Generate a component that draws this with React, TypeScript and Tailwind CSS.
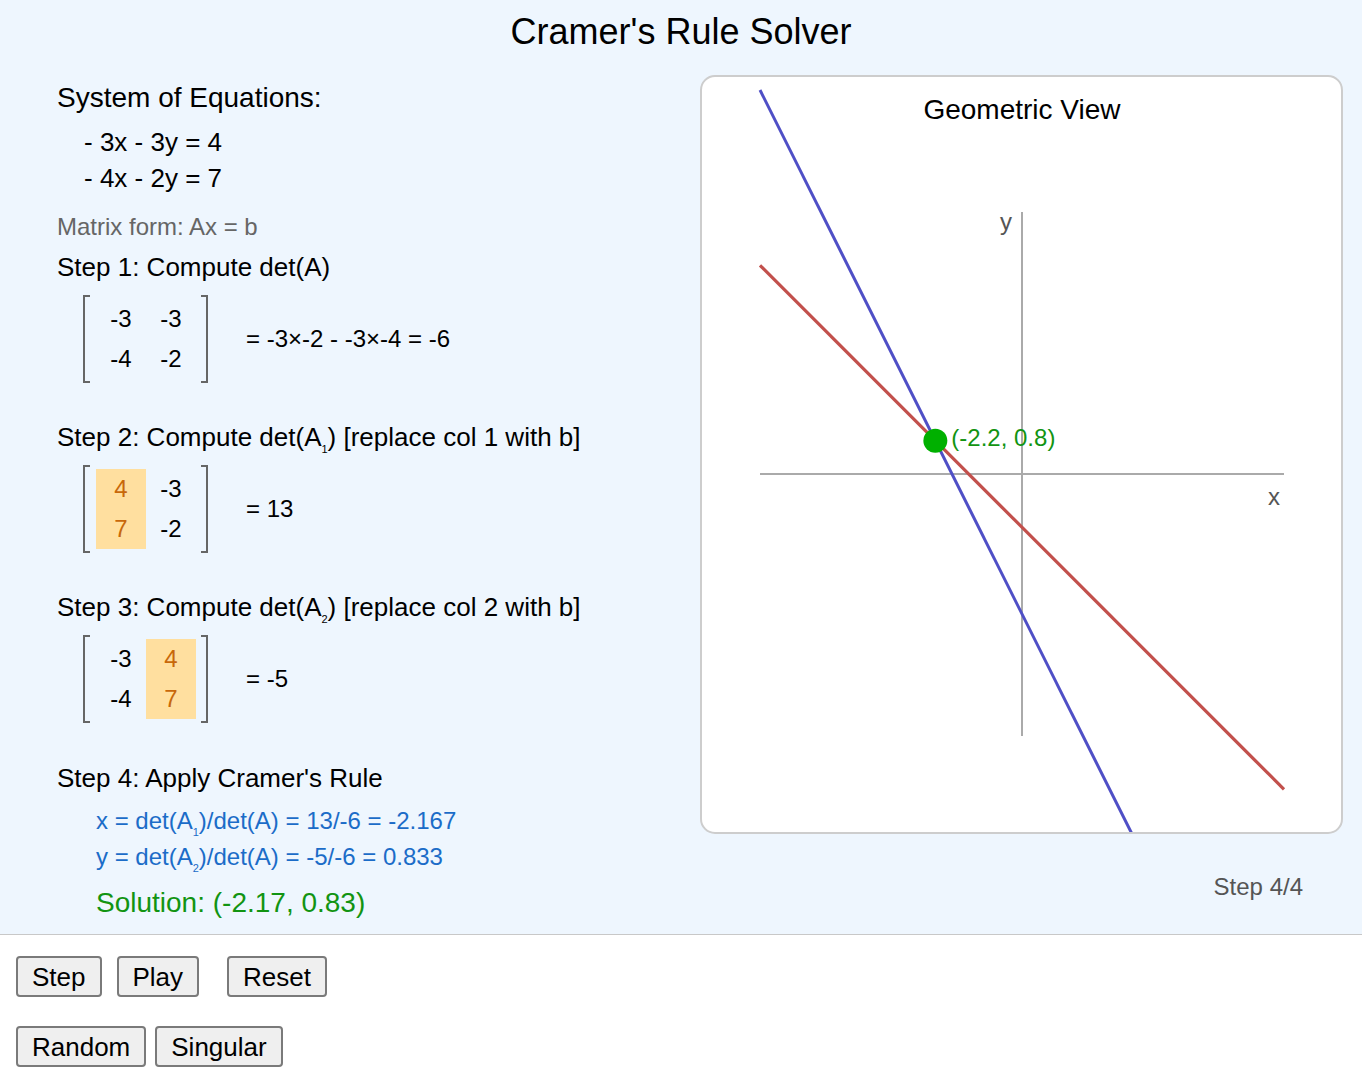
import React from 'react'

const A = [
  [-3, -3],
  [-4, -2],
]
const b = [4, 7]

// plot constants (svg local coords inside the panel border)
const CX = 320
const CY = 397
const S = 40
const U = 6.55

function px(u: number) {
  return CX + u * S
}
function py(v: number) {
  return CY - v * S
}

function Matrix({ rows, hl }: { rows: number[][]; hl?: number }) {
  return (
    <div className="ml-[26px] flex items-stretch">
      <div className="w-[7px] border-y-2 border-l-2 border-[#666]" />
      <div className="ml-[6px] mr-[5px] grid grid-cols-[50px_50px] py-[4px]">
        {rows.map((r, i) =>
          r.map((v, j) => (
            <div
              key={`${i}-${j}`}
              className={`h-[40px] text-center text-[24px] leading-[40px] ${
                hl === j ? 'bg-[#ffdf9f] text-[#c8680a]' : 'text-black'
              }`}
            >
              {v}
            </div>
          ))
        )}
      </div>
      <div className="w-[7px] border-y-2 border-r-2 border-[#666]" />
    </div>
  )
}

function Sub({ n }: { n: number }) {
  return <span className="align-[-7px] text-[11px] leading-none">{n}</span>
}

function StepRow({ rows, hl, result }: { rows: number[][]; hl?: number; result: string }) {
  return (
    <div className="mt-[10px] flex items-center">
      <Matrix rows={rows} hl={hl} />
      <div className="ml-[38px] text-[24px] leading-[32px]">{result}</div>
    </div>
  )
}

function GeometricView() {
  const x1 = -U
  const x2 = U
  // -4x - 2y = 7  ->  y = -2x - 3.5
  const blue = (x: number) => -2 * x - 3.5
  // -3x - 3y = 4  ->  y = -x - 4/3
  const red = (x: number) => -x - 4 / 3
  const sx = -13 / 6
  const sy = 5 / 6

  return (
    <div className="relative h-[759px] w-[643px] overflow-hidden rounded-[15px] border-2 border-[#cdcdcd] bg-white">
      <svg width="639" height="755" className="absolute left-0 top-0">
        <text x="320" y="42" textAnchor="middle" fontSize="28" fill="#000">
          Geometric View
        </text>
        <line x1={px(-U)} y1={CY} x2={px(U)} y2={CY} stroke="#aaa" strokeWidth="2" />
        <line x1={CX} y1={py(6.55)} x2={CX} y2={py(-6.55)} stroke="#aaa" strokeWidth="2" />
        <text x="310" y="153" textAnchor="end" fontSize="24" fill="#555">
          y
        </text>
        <text x="578" y="428" textAnchor="end" fontSize="24" fill="#555">
          x
        </text>
        <line x1={px(x1)} y1={py(blue(x1))} x2={px(x2)} y2={py(blue(x2))} stroke="#4f4fc6" strokeWidth="3" />
        <line x1={px(x1)} y1={py(red(x1))} x2={px(x2)} y2={py(red(x2))} stroke="#c2504c" strokeWidth="3.2" />
        <circle cx={px(sx)} cy={py(sy)} r="12" fill="#00b000" />
        <text x={px(sx) + 16} y={py(sy) + 5} fontSize="24" fill="#129412">
          (-2.2, 0.8)
        </text>
      </svg>
    </div>
  )
}

function Btn({ label, className = '' }: { label: string; className?: string }) {
  return (
    <button
      className={`h-[41px] rounded-[4px] border-2 border-[#7a7a7a] bg-[#efefef] px-[14px] text-[26px] leading-[30px] text-black ${className}`}
    >
      {label}
    </button>
  )
}

export default function App() {
  const det = A[0][0] * A[1][1] - A[0][1] * A[1][0]
  const A1 = [
    [b[0], A[0][1]],
    [b[1], A[1][1]],
  ]
  const A2 = [
    [A[0][0], b[0]],
    [A[1][0], b[1]],
  ]
  const d1 = A1[0][0] * A1[1][1] - A1[0][1] * A1[1][0]
  const d2 = A2[0][0] * A2[1][1] - A2[0][1] * A2[1][0]

  return (
    <div className="min-h-[1090px] bg-white font-['Liberation_Sans',Arial,sans-serif] text-black">
      <div className="h-[935px] border-b border-[#c8c8c8] bg-[#eef6fe]">
        <h1 className="pt-[10px] text-center text-[36px] leading-[44px]">Cramer's Rule Solver</h1>

        <div className="mt-[21px] flex">
          {/* left: steps */}
          <div className="flex-1 pl-[57px]">
            <div className="mt-[5px] text-[28px] leading-[36px]">System of Equations:</div>
            <div className="mt-[8px] pl-[27px] text-[26px] leading-[36px]">
              <div>- 3x - 3y = 4</div>
              <div>- 4x - 2y = 7</div>
            </div>
            <div className="mt-[15px] text-[24px] leading-[32px] text-[#666]">Matrix form: Ax = b</div>

            <div className="mt-[6px] text-[26px] leading-[36px]">Step 1: Compute det(A)</div>
            <StepRow rows={A} result={`= -3×-2 - -3×-4 = ${det}`} />

            <div className="mt-[36px] text-[26px] leading-[36px]">
              Step 2: Compute det(A<Sub n={1} />) [replace col 1 with b]
            </div>
            <StepRow rows={A1} hl={0} result={`= ${d1}`} />

            <div className="mt-[36px] text-[26px] leading-[36px]">
              Step 3: Compute det(A<Sub n={2} />) [replace col 2 with b]
            </div>
            <StepRow rows={A2} hl={1} result={`= ${d2}`} />

            <div className="mt-[37px] text-[26px] leading-[36px]">Step 4: Apply Cramer's Rule</div>
            <div className="mt-[7px] pl-[39px] text-[24px] leading-[36px] text-[#1b6cc8]">
              <div>
                x = det(A<Sub n={1} />)/det(A) = 13/-6 = -2.167
              </div>
              <div>
                y = det(A<Sub n={2} />)/det(A) = -5/-6 = 0.833
              </div>
            </div>
            <div className="mt-[8px] pl-[39px] text-[28px] leading-[40px] text-[#129412]">
              Solution: (-2.17, 0.83)
            </div>
          </div>

          {/* right: plot */}
          <div className="mr-[19px] w-[643px] shrink-0">
            <GeometricView />
            <div className="mt-[37px] pr-[40px] text-right text-[24px] leading-[32px] text-[#555]">Step 4/4</div>
          </div>
        </div>
      </div>

      <div className="pl-[16px] pt-[21px]">
        <div className="flex">
          <Btn label="Step" />
          <Btn label="Play" className="ml-[15px]" />
          <Btn label="Reset" className="ml-[28px]" />
        </div>
        <div className="mt-[29px] flex">
          <Btn label="Random" />
          <Btn label="Singular" className="ml-[9px]" />
        </div>
      </div>
    </div>
  )
}
